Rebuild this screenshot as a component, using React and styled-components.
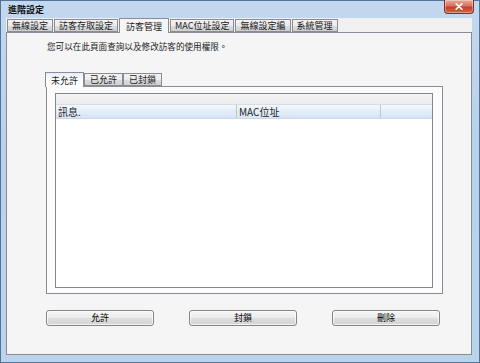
import React, {useState} from 'react';
import styled, {createGlobalStyle} from 'styled-components';

const GlobalStyle = createGlobalStyle`
  html, body {
    margin: 0;
    padding: 0;
    background: #ffffff;
  }
  * {
    box-sizing: border-box;
  }
`

const topTabs = ['無線設定', '訪客存取設定', '訪客管理', 'MAC位址設定', '無線設定編', '系統管理'];
const guestTabs = ['未允許', '已允許', '已封鎖'];
const columns = [
  {label: '訊息.', width: 181},
  {label: 'MAC位址', width: 144},
  {label: '', width: null}
];
const actions = ['允許', '封鎖', '刪除'];

const App = () => {
  const [topTab, setTopTab] = useState(2);
  const [guestTab, setGuestTab] = useState(0);

  return (
    <>
      <GlobalStyle />
      <Window>
        <TitleBar>
          <Title>進階設定</Title>
          <CloseButton aria-label="close">
            <svg width="8" height="7" viewBox="0 0 8 7">
              <path d="M1.2 0.8 L6.8 6.2 M6.8 0.8 L1.2 6.2" stroke="#ffffff" strokeWidth="1.6" strokeLinecap="round" />
            </svg>
          </CloseButton>
        </TitleBar>
        <Client>
          <TabStrip>
            {topTabs.map((t, i) => (
              <Tab key={t} active={i === topTab} onClick={() => setTopTab(i)}>{t}</Tab>
            ))}
          </TabStrip>
          <TabPanel>
            <Description>您可以在此頁面查詢以及修改訪客的使用權限。</Description>
            <GuestTabs>
              {guestTabs.map((t, i) => (
                <GuestTab key={t} active={i === guestTab} onClick={() => setGuestTab(i)}>{t}</GuestTab>
              ))}
            </GuestTabs>
            <GuestPage>
              <ListView>
                <ListStrip />
                <HeaderRow>
                  {columns.map((c, i) => (
                    <HeaderCell key={i} width={c.width}>{c.label}</HeaderCell>
                  ))}
                </HeaderRow>
                <ListBody />
              </ListView>
            </GuestPage>
            <ButtonRow>
              {actions.map(a => (
                <ActionButton key={a}>{a}</ActionButton>
              ))}
            </ButtonRow>
          </TabPanel>
        </Client>
      </Window>
    </>
  )
}

export default App;

const Window = styled.div`
  width: 480px;
  height: 363px;
  padding: 0 7px 7px 5px;

  border: 1px solid #52739a;
  background: linear-gradient(to bottom, #c3d8ef, #b9d1ea 40%, #bcd3ec);

  display: flex;
  flex-direction: column;

  font-family: "Noto Sans CJK TC", "Noto Sans", sans-serif;
  color: #000000;
`

const TitleBar = styled.div`
  height: 17px;
  flex-shrink: 0;

  display: flex;
  justify-content: space-between;
  align-items: flex-start;
`

const Title = styled.span`
  margin: 3px 0 0 2px;
  font-size: 9px;
  line-height: 11px;
  font-weight: bold;
  color: #111111;
`

const CloseButton = styled.button`
  width: 30px;
  height: 14px;
  margin: -1px -2px 0 0;
  padding: 0;

  border: 1px solid #7c3326;
  border-top: none;
  border-radius: 0 0 4px 4px;
  background: linear-gradient(to bottom, #eaa898, #d9735f 45%, #c2402c 55%, #d4644c);
  box-shadow: inset 0 0 0 1px rgba(255, 255, 255, .35);

  display: flex;
  justify-content: center;
  align-items: center;
`

const Client = styled.div`
  flex: 1;
  background: #f0f0f0;

  display: flex;
  flex-direction: column;
`

const TabStrip = styled.div`
  height: 14px;
  flex-shrink: 0;
  padding-left: 1px;

  display: flex;
  align-items: flex-end;
  gap: 1px;
`

const Tab = styled.div`
  height: ${p => p.active ? '15px' : '13px'};
  margin-bottom: ${p => p.active ? '-1px' : '0'};
  padding: 0 ${p => p.active ? '6px' : '4px'};
  position: relative;
  z-index: ${p => p.active ? 2 : 1};

  border: 1px solid #898c95;
  border-bottom: ${p => p.active ? 'none' : '1px solid #898c95'};
  background: ${p => p.active
    ? '#f5f5f5'
    : 'linear-gradient(to bottom, #f2f2f2, #ebebeb 50%, #dddddd 51%, #cfcfcf)'};

  display: flex;
  align-items: center;

  font-size: 9px;
  line-height: 11px;
  color: #1a1a1a;
  white-space: nowrap;
  cursor: default;
`

const TabPanel = styled.div`
  flex: 1;
  padding: 7px 0 0 39px;

  border: 1px solid #898c95;
  background: #f5f5f5;

  display: flex;
  flex-direction: column;
`

const Description = styled.p`
  margin: 0 0 0 1px;
  font-size: 8.6px;
  line-height: 12px;
  color: #1a1a1a;
`

const GuestTabs = styled.div`
  height: 14px;
  margin-top: 20px;

  display: flex;
  align-items: flex-end;
`

const GuestTab = styled(Tab)`
  margin-left: ${p => p.active ? '-1px' : '0'};
  padding: 0 ${p => p.active ? '5px' : '5px'};
  background: ${p => p.active
    ? 'linear-gradient(to bottom, #e6f0fa, #ffffff 60%)'
    : 'linear-gradient(to bottom, #f2f2f2, #ebebeb 50%, #dddddd 51%, #cfcfcf)'};
`

const GuestPage = styled.div`
  width: 397px;
  height: 208px;
  padding: 6px 9px 5px 8px;

  border: 1px solid #898c95;
  background: #fcfcfc;

  display: flex;
`

const ListView = styled.div`
  flex: 1;
  border: 1px solid #828790;
  background: #ffffff;

  display: flex;
  flex-direction: column;
`

const ListStrip = styled.div`
  height: 11px;
  flex-shrink: 0;
  background: linear-gradient(to bottom, #f4f4f4, #ececec);
  border-bottom: 1px solid #d6dde6;
`

const HeaderRow = styled.div`
  height: 14px;
  flex-shrink: 0;

  border-bottom: 1px solid #c9d6e4;
  background: linear-gradient(to bottom, #f3f8fd, #e3edf8 50%, #d7e5f4);

  display: flex;
`

const HeaderCell = styled.div`
  ${p => p.width ? `width: ${p.width}px;` : 'flex: 1;'}
  padding-left: 2px;

  border-right: ${p => p.width ? '1px solid #b7c6d8' : 'none'};

  font-size: 10px;
  line-height: 13px;
  color: #1e1e1e;
  white-space: nowrap;
`

const ListBody = styled.div`
  flex: 1;
  background: #ffffff;
`

const ButtonRow = styled.div`
  width: 394px;
  margin-top: 16px;

  display: flex;
  justify-content: space-between;
`

const ActionButton = styled.button`
  width: 108px;
  height: 16px;
  padding: 0;

  border: 1px solid #858585;
  border-radius: 3px;
  background: linear-gradient(to bottom, #f6f6f6, #ececec 50%, #dedede 51%, #d4d4d4);
  box-shadow: inset 0 0 0 1px rgba(255, 255, 255, .7);

  font-family: "Noto Sans CJK TC", "Noto Sans", sans-serif;
  font-size: 9px;
  line-height: 12px;
  color: #000000;
`
